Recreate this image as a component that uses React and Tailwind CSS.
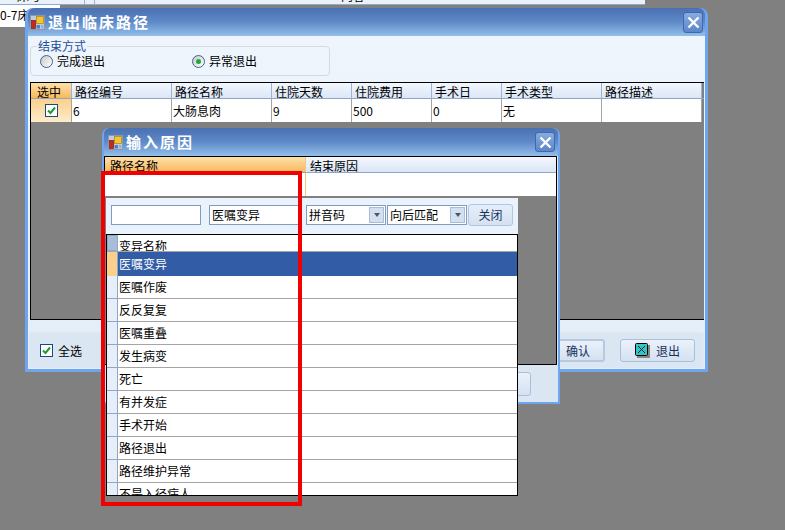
const font = { fontFamily: '"Noto Sans CJK SC", sans-serif' }

const outerCols = [
  { name: '选中', w: 'w-[41px]' },
  { name: '路径编号', w: 'w-[100px]', val: '6' },
  { name: '路径名称', w: 'w-[100px]', val: '大肠息肉' },
  { name: '住院天数', w: 'w-[80px]', val: '9' },
  { name: '住院费用', w: 'w-[80px]', val: '500' },
  { name: '手术日', w: 'w-[70px]', val: '0' },
  { name: '手术类型', w: 'w-[100px]', val: '无' },
  { name: '路径描述', w: 'w-[100px]', val: '' },
]

const reasons = ['医嘱作废', '反反复复', '医嘱重叠', '发生病变', '死亡', '有并发症', '手术开始', '路径退出', '路径维护异常']

function AppIcon() {
  return (
    <svg width="15" height="15" viewBox="0 0 15 15" className="shrink-0">
      <rect x="0.5" y="0.5" width="14" height="14" fill="#c4cbd6" stroke="#8d97a8" />
      <rect x="1.5" y="5.5" width="4" height="8" fill="#c8281c" stroke="#7a1a14" strokeWidth="0.7" />
      <rect x="6.5" y="1.5" width="7" height="7" fill="#f5c531" stroke="#a98414" strokeWidth="0.7" />
      <rect x="6.5" y="10" width="3.5" height="3.5" fill="#4f7fd0" />
      <rect x="11" y="10" width="2.5" height="3.5" fill="#8fb2e6" />
    </svg>
  )
}

function CloseBtn({ size }) {
  return (
    <div className={`${size} rounded-[3px] border border-[#3f68ad] bg-gradient-to-b from-[#88aadf] to-[#5c86cb] flex items-center justify-center`}>
      <svg width="13" height="13" viewBox="0 0 13 13">
        <path d="M1.5 1.5 L11.5 11.5 M11.5 1.5 L1.5 11.5" stroke="#fff" strokeWidth="2.4" />
      </svg>
    </div>
  )
}

function Check() {
  return (
    <div className="w-[13px] h-[13px] border border-[#1c4a7c] bg-white flex items-center justify-center">
      <svg width="11" height="11" viewBox="0 0 11 11">
        <path d="M2 5.5 L4.5 8 L9 2.5" fill="none" stroke="#1f9a2c" strokeWidth="2" />
      </svg>
    </div>
  )
}

function Radio({ on }) {
  return (
    <div className="w-[13px] h-[13px] rounded-full border border-[#3f648f] bg-gradient-to-br from-[#c9c9c9] to-white flex items-center justify-center">
      {on && <div className="w-[5px] h-[5px] rounded-full bg-[#25a83a]" />}
    </div>
  )
}

function Combo({ text }) {
  return (
    <div className="w-[80px] h-[20px] border border-[#7f9dc4] bg-white flex items-center justify-between pl-[2px] pr-[1px]">
      <span className="leading-none pb-[1px]">{text}</span>
      <div className="w-[15px] h-[16px] border border-[#a9bdd8] bg-[#d3e0f1] flex items-center justify-center">
        <div className="border-x-[3px] border-x-transparent border-t-[4px] border-t-[#555]" />
      </div>
    </div>
  )
}

export default function App() {
  return (
    <div style={font} className="relative w-[785px] h-[530px] overflow-hidden bg-[#808080] text-[12px] text-black">
      {/* form behind the windows */}
      <div className="w-[645px] h-[5px] flex overflow-hidden bg-[#eaf1fb] border-b border-[#8fa9cf] leading-[14px]">
        <div className="w-[85px] shrink-0 border-r border-[#9db3d2] pl-[17px] -mt-[11px]">床号</div>
        <div className="w-[10px] shrink-0 border-r border-[#9db3d2]" />
        <div className="w-[270px] shrink-0 text-right -mt-[11px]">内容</div>
      </div>
      <div className="w-[60px] h-[22px] bg-white pt-[1px] whitespace-nowrap overflow-hidden leading-[18px]">0-7床位</div>

      {/* 退出临床路径 */}
      <div className="absolute left-[25px] top-[8px] w-[683px] h-[364px] flex flex-col rounded-t-[8px] border-[3px] border-t-0 border-[#6ea5ee] bg-[#6ea5ee]">
        <div className="h-[28px] shrink-0 rounded-t-[7px] bg-gradient-to-b from-[#4a70b2] via-[#5f8ac8] to-[#93bfea] flex items-center pl-[2px] pr-[2px]">
          <AppIcon />
          <span className="ml-[3px] text-[15px] font-bold text-white tracking-[2px]">退出临床路径</span>
          <div className="ml-auto">
            <CloseBtn size="w-[20px] h-[21px]" />
          </div>
        </div>
        <div className="flex-1 flex flex-col bg-gradient-to-b from-[#eef5fd] to-[#e3edf9] px-[2px]">
          <fieldset className="w-[300px] h-[37px] mt-[3px] border border-[#d6d9df] rounded-[4px] pl-[6px]">
            <legend className="text-[#1f4e96] px-[1px] leading-[14px]">结束方式</legend>
            <div className="flex items-center -mt-[1px] pl-[3px]">
              <Radio on={false} />
              <span className="ml-[4px] w-[135px]">完成退出</span>
              <Radio on />
              <span className="ml-[4px]">异常退出</span>
            </div>
          </fieldset>
          <div className="mt-[6px] w-[674px] h-[238px] shrink-0 border-t border-l border-b border-black bg-[#808080] flex flex-col">
            <div className="flex h-[16px] shrink-0 border-b border-[#8ea6c8]">
              {outerCols.map((c, i) => (
                <div key={c.name} className={`${c.w} leading-[17px] border-r border-[#9db3d2] ${i === 0 ? 'bg-gradient-to-b from-[#fde0a8] to-[#f8b95c] pl-[6px]' : 'pl-[3px] bg-gradient-to-b from-[#f3f7fd] to-[#dbe6f6]'}`}>{c.name}</div>
              ))}
            </div>
            <div className="flex h-[23px] shrink-0">
              {outerCols.map((c, i) => (
                <div key={c.name} className={`${c.w} flex items-center pl-[1px] border-r border-[#a5a5a5] ${i === 0 ? 'justify-center bg-gradient-to-b from-[#fbd08a] to-[#fdeccb]' : 'bg-white'}`}>
                  {i === 0 ? <Check /> : c.val}
                </div>
              ))}
            </div>
          </div>
          <div className="flex-1 mt-[12px] mb-[1px] -mx-[1px] rounded-[3px] border-t border-r border-[#e3e6ea] bg-[#dbe6f3] flex items-center pl-[11px] pr-[8px]">
            <Check />
            <span className="ml-[5px]">全选</span>
            <div className="ml-auto w-[70px] h-[23px] rounded-[3px] border-2 border-[#b8c8de] bg-gradient-to-b from-[#eaf1fa] to-[#d5e1f1] flex items-center justify-end pr-[13px] text-[#15315c]">确认</div>
            <div className="ml-[15px] w-[75px] h-[23px] rounded-[3px] border border-[#a9bfdc] bg-gradient-to-b from-[#eaf1fa] to-[#d5e1f1] flex items-center pl-[14px] text-[#15315c]">
              <svg width="15" height="15" viewBox="0 0 15 15" className="shrink-0">
                <rect x="2" y="2" width="13" height="13" fill="#8a8578" />
                <rect x="0.5" y="0.5" width="12" height="12" rx="1" fill="#35c5c9" stroke="#000" />
                <path d="M3 3 L10 10 M10 3 L3 10" stroke="#123" strokeWidth="1" />
              </svg>
              <span className="ml-[6px]">退出</span>
            </div>
          </div>
        </div>
      </div>

      {/* 输入原因 */}
      <div className="absolute left-[102px] top-[128px] w-[458px] h-[276px] flex flex-col rounded-t-[7px] border-[2px] border-t-0 border-[#6ea5ee] bg-[#6ea5ee]">
        <div className="h-[28px] shrink-0 rounded-t-[6px] bg-gradient-to-b from-[#4a70b2] via-[#5f8ac8] to-[#93bfea] flex items-center pl-[4px] pr-[3px]">
          <AppIcon />
          <span className="ml-[3px] text-[15px] font-bold text-white tracking-[2px]">输入原因</span>
          <div className="ml-auto">
            <CloseBtn size="w-[20px] h-[20px]" />
          </div>
        </div>
        <div className="flex-1 flex flex-col bg-[#dbe6f3]">
          <div className="relative h-[209px] shrink-0 border-t border-l border-r border-b border-black bg-[#808080] mr-[1px]">
            <div className="flex h-[16px] border-b border-[#8ea6c8]">
              <div className="w-[201px] leading-[17px] pl-[5px] bg-gradient-to-b from-[#fde0a8] to-[#f8b95c] border-r border-[#f3c67e]">路径名称</div>
              <div className="flex-1 leading-[17px] pl-[4px] bg-gradient-to-b from-[#f3f7fd] to-[#dbe6f6]">结束原因</div>
            </div>
            <div className="flex h-[23px]">
              <div className="w-[201px] bg-white border-r border-[#f3c67e]" />
              <div className="flex-1 bg-white" />
            </div>

            {/* 下拉选择面板 */}
            <div className="absolute left-[1px] top-[41px] z-10 w-[412px] h-[298px] flex flex-col bg-[#eaf2fc]">
              <div className="h-[36px] shrink-0 flex items-start pt-[7px] pl-[5px] gap-[8px]">
                <div className="w-[90px] h-[20px] border border-[#7f9dc4] bg-white" />
                <div className="w-[91px] h-[20px] border border-[#7f9dc4] bg-white flex items-center pl-[2px] pb-[1px] leading-none">医嘱变异</div>
                <div className="flex -ml-[2px]">
                  <Combo text="拼音码" />
                  <div className="ml-[1px]"><Combo text="向后匹配" /></div>
                </div>
                <div className="-ml-[7px] -mt-[1px] w-[45px] h-[22px] rounded-[3px] border border-[#b3c6df] bg-gradient-to-b from-[#e6eef9] to-[#d5e1f1] flex items-center justify-center pb-[1px] text-[#15315c]">关闭</div>
              </div>
              <div className="flex-1 min-h-0 border border-black bg-white overflow-hidden">
                <div className="flex h-[17px] border-b border-[#a5a5a5]">
                  <div className="w-[11px] shrink-0 border border-[#8fa9cf] bg-[#a9bcd8]" />
                  <div className="leading-[22px] pl-[1px] overflow-hidden">变异名称</div>
                </div>
                <div className="flex h-[24px]">
                  <div className="w-[11px] shrink-0 bg-[#fbcf8c] border-r border-[#8ea6c8]" />
                  <div className="flex-1 flex items-center pl-[1px] bg-[#325ca6] text-white">医嘱变异</div>
                </div>
                {[...reasons, '不是入径病人'].map(r => (
                  <div key={r} className="flex h-[23px]">
                    <div className="w-[11px] shrink-0 bg-[#e6eefa] border-r border-b border-[#8ea6c8]" />
                    <div className="flex-1 flex items-center pl-[1px] border-b border-[#a5a5a5]">{r}</div>
                  </div>
                ))}
              </div>
            </div>
          </div>
          <div className="flex-1 flex justify-end items-center pr-[27px]">
            <div className="w-[70px] h-[24px] rounded-[3px] border border-[#a9bfdc] bg-gradient-to-b from-[#eaf1fa] to-[#d5e1f1]" />
          </div>
        </div>
      </div>

      {/* 红框标注 */}
      <div className="absolute left-[101px] top-[171px] z-20 w-[201px] h-[335px] border-[4px] border-[#f00000]" />
    </div>
  )
}
